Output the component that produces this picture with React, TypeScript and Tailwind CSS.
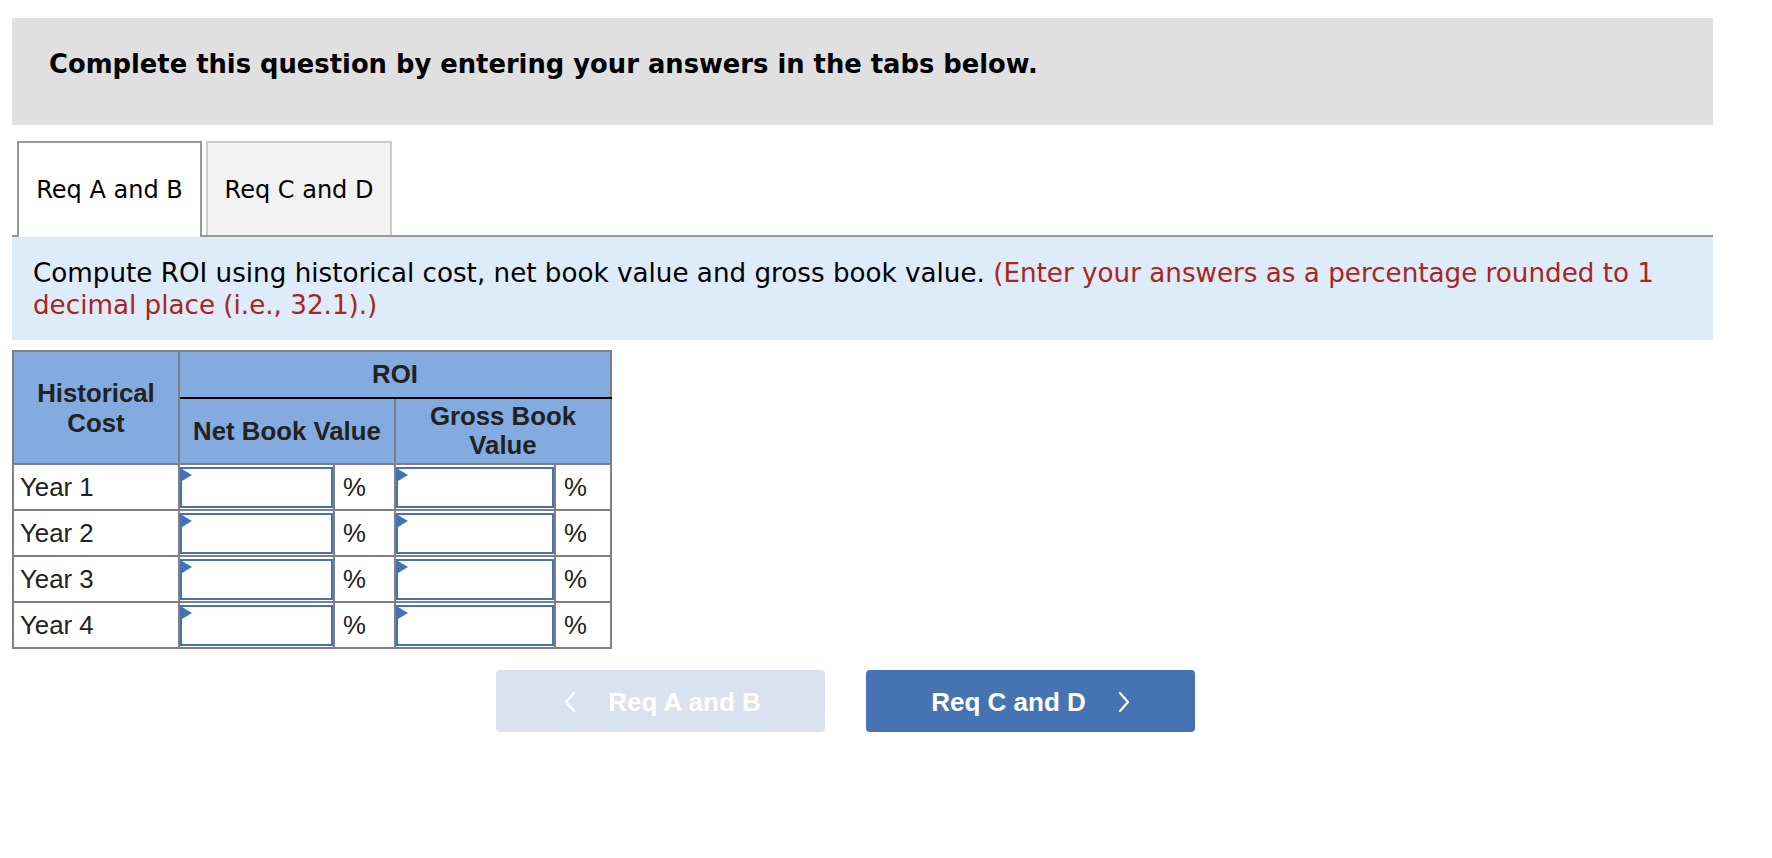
import React from 'react';

const VERDANA = "font-['DejaVu_Sans',Verdana,sans-serif]";
const ARIAL = "font-['Liberation_Sans',Arial,sans-serif]";

const YEARS = ['Year 1', 'Year 2', 'Year 3', 'Year 4'];

const AnswerInput: React.FC = () => (
  <div className="relative h-[41px] w-full border-2 border-[#4472b4] bg-white">
    <span className="absolute left-0 top-0 h-0 w-0 border-y-[6px] border-l-[10px] border-y-transparent border-l-[#4472b4]" />
    <input type="text" className="h-full w-full bg-transparent px-2 outline-none" />
  </div>
);

const Chevron: React.FC<{ dir: 'left' | 'right' }> = ({ dir }) => (
  <svg width="12" height="22" viewBox="0 0 12 22" fill="none">
    <polyline
      points={dir === 'left' ? '10,2 2,11 10,20' : '2,2 10,11 2,20'}
      stroke="currentColor"
      strokeWidth="2.2"
      strokeLinecap="round"
      strokeLinejoin="round"
    />
  </svg>
);

export default function App() {
  return (
    <div className="h-[858px] w-[1772px] bg-white pl-[12px] pt-[18px] text-black">
      <div className="w-[1701px]">
        {/* question banner */}
        <div className={`h-[107px] bg-[#e0e0e0] pl-[37px] pt-[31px] text-[25.8px] font-bold leading-[30px] ${VERDANA}`}>
          Complete this question by entering your answers in the tabs below.
        </div>

        {/* tabs */}
        <div className={`mt-[16px] flex items-end gap-[4px] border-b-2 border-[#999999] pl-[5px] text-[24px] ${VERDANA}`}>
          <button className="-mb-[2px] flex h-[96px] w-[185px] items-center justify-center border-2 border-b-0 border-[#999999] bg-white">
            Req A and B
          </button>
          <button className="flex h-[94px] w-[186px] items-center justify-center border-2 border-b-0 border-[#cccccc] bg-[#f2f2f2] pt-[2px]">
            Req C and D
          </button>
        </div>

        {/* instructions */}
        <div className={`bg-[#deebf8] px-[21px] pb-[19px] pt-[20px] text-[26.2px] leading-[32px] ${VERDANA}`}>
          Compute ROI using historical cost, net book value and gross book value.{' '}
          <span className="text-[#a8261f]">(Enter your answers as a percentage rounded to 1 decimal place (i.e., 32.1).)</span>
        </div>

        {/* ROI table */}
        <table className={`mt-[10px] w-[598px] table-fixed border-collapse border-2 border-[#808080] text-[25.8px] ${ARIAL}`}>
          <colgroup>
            <col className="w-[166px]" />
            <col className="w-[155px]" />
            <col className="w-[61px]" />
            <col className="w-[160px]" />
            <col className="w-[56px]" />
          </colgroup>
          <thead>
            <tr className="h-[47px]">
              <th rowSpan={2} className="border-2 border-[#808080] bg-[#83abdf] px-2 text-center align-middle font-bold leading-[30px] text-[#222222]">
                Historical Cost
              </th>
              <th colSpan={4} className="border-2 border-b-2 border-[#808080] border-b-black bg-[#83abdf] pb-[2px] text-center font-bold leading-[30px] text-[#222222]">
                ROI
              </th>
            </tr>
            <tr className="h-[66px]">
              <th colSpan={2} className="border-2 border-t-0 border-[#808080] bg-[#83abdf] px-1 text-center font-bold leading-[28px] text-[#222222]">
                Net Book Value
              </th>
              <th colSpan={2} className="border-2 border-t-0 border-[#808080] bg-[#83abdf] px-3 text-center font-bold leading-[29px] text-[#222222]">
                Gross Book Value
              </th>
            </tr>
          </thead>
          <tbody>
            {YEARS.map(year => (
              <tr key={year} className="h-[46px]">
                <td className="border-2 border-[#808080] px-[6px] leading-[28px] text-[#222222]">{year}</td>
                <td className="border-2 border-[#808080] px-0 py-[1px]">
                  <AnswerInput />
                </td>
                <td className="border-2 border-[#808080] pl-[8px] text-[#222222]">%</td>
                <td className="border-2 border-[#808080] px-0 py-[1px]">
                  <AnswerInput />
                </td>
                <td className="border-2 border-[#808080] pl-[8px] text-[#222222]">%</td>
              </tr>
            ))}
          </tbody>
        </table>

        {/* navigation */}
        <div className={`mt-[21px] flex gap-[41px] pl-[484px] text-[26px] font-bold ${ARIAL}`}>
          <button className="flex h-[62px] w-[329px] items-center justify-center gap-[32px] rounded-[4px] bg-[#d9e3f0] pl-[4px] pt-[2px] text-white">
            <Chevron dir="left" />
            <span>Req A and B</span>
          </button>
          <button className="flex h-[62px] w-[329px] items-center justify-center gap-[32px] rounded-[4px] bg-[#4674b3] pt-[2px] text-white">
            <span>Req C and D</span>
            <Chevron dir="right" />
          </button>
        </div>
      </div>
    </div>
  );
}
